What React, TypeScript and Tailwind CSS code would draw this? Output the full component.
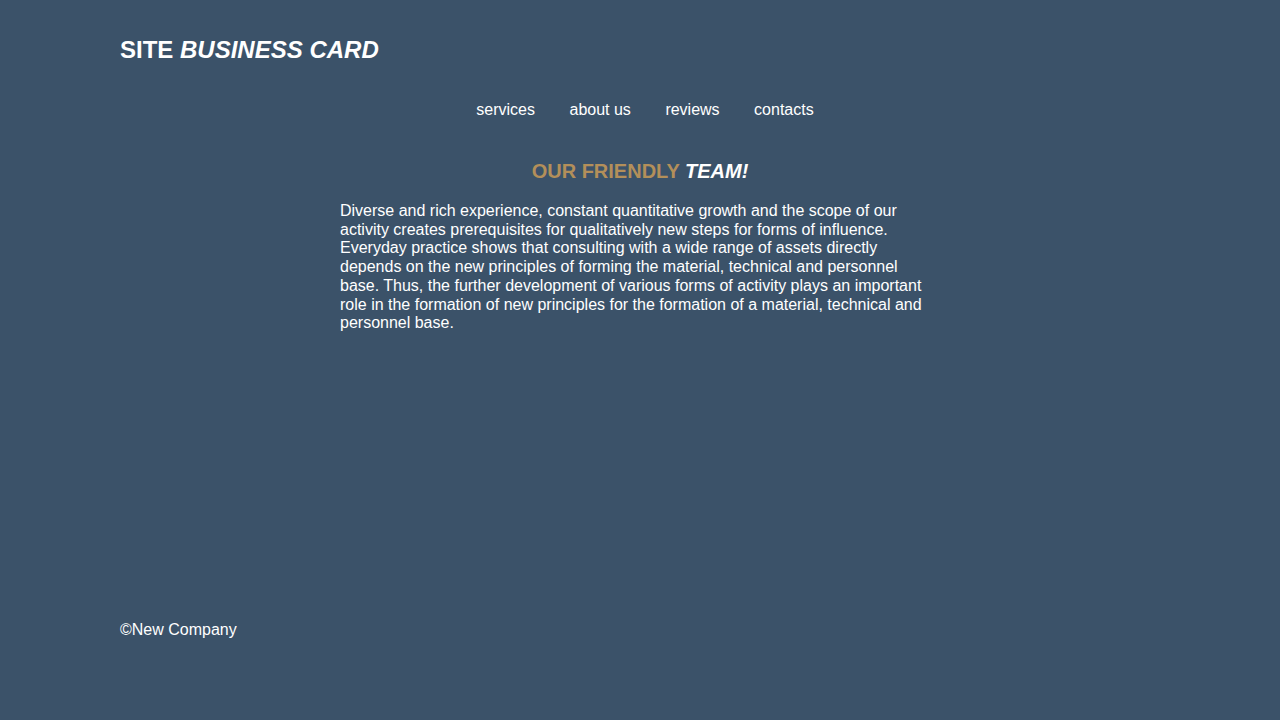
import React from "react";

export default function App() {
  return (
    <div
      className="min-h-[720px] bg-[#3b5269] text-white flex flex-col px-[120px]"
      style={{ fontFamily: '"Liberation Sans", Arial, sans-serif' }}
    >
      <header className="pt-[36px]">
        <h1 className="text-[24px] leading-[28px] font-bold">
          SITE <em>BUSINESS CARD</em>
        </h1>
      </header>
      <nav className="mt-[37px] flex justify-center pl-[10px]">
        <ul className="flex gap-[34.5px] text-[16px] leading-[18px]">
          <li>services</li>
          <li>about us</li>
          <li>reviews</li>
          <li>contacts</li>
        </ul>
      </nav>
      <main className="mt-[41px] flex flex-col items-center">
        <h2 className="text-[20px] leading-[23px] font-bold text-[#b38f5a]">
          OUR FRIENDLY <em className="text-white">TEAM!</em>
        </h2>
        <p className="mt-[19px] w-[600px] text-[16px] leading-[18.7px]">
          Diverse and rich experience, constant quantitative growth and the scope of our
          activity creates prerequisites for qualitatively new steps for forms of influence.
          Everyday practice shows that consulting with a wide range of assets directly
          depends on the new principles of forming the material, technical and personnel
          base. Thus, the further development of various forms of activity plays an important
          role in the formation of new principles for the formation of a material, technical
          and personnel base.
        </p>
      </main>
      <footer className="mt-auto pb-[81px] text-[16px] leading-[18px]">©New Company</footer>
    </div>
  );
}
